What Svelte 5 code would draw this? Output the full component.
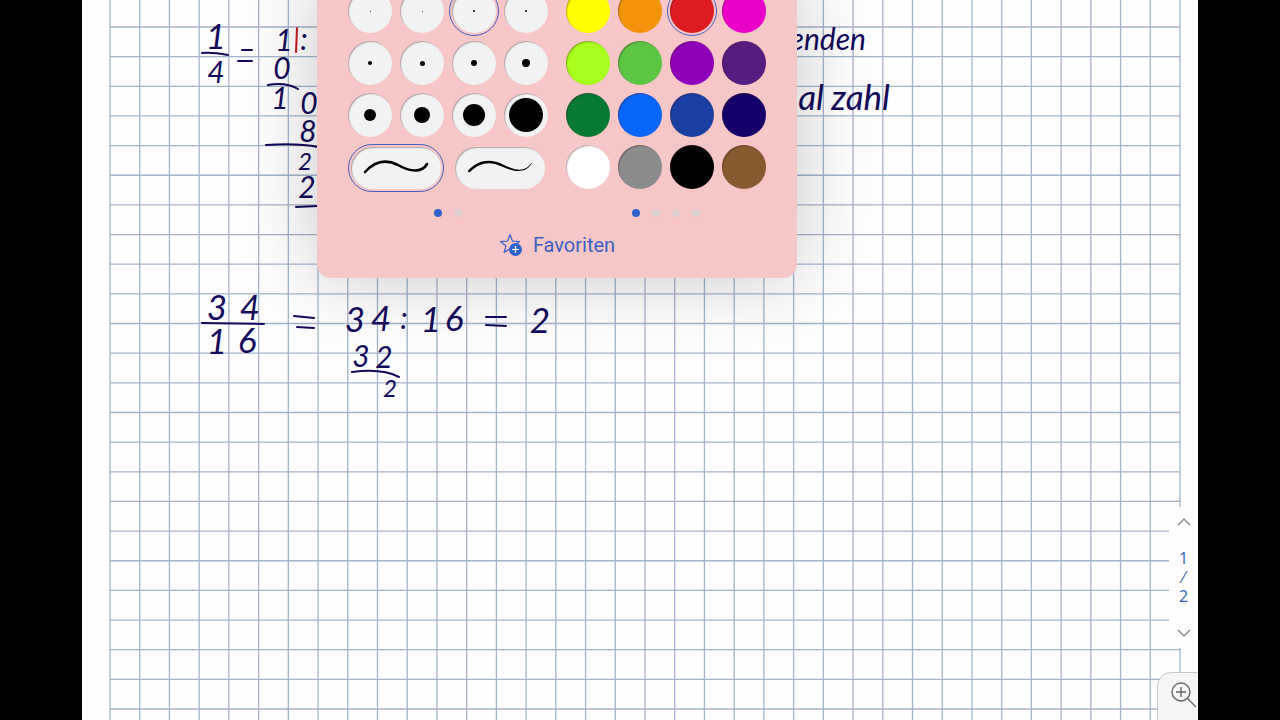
<script lang="ts">
  interface InkText {
    text: string;
    x: number;
    y: number;
    size: 'small' | 'medium' | 'large';
    end?: boolean;
  }

  const nibSizes = [1, 1, 2, 2, 4, 5, 6, 8, 12, 16, 22, 34];

  const colors = [
    { name: 'Gelb', value: '#ffff00' },
    { name: 'Orange', value: '#f2930b' },
    { name: 'Rot', value: '#dc1c22' },
    { name: 'Magenta', value: '#ea00c8' },
    { name: 'Limette', value: '#a6ff1c' },
    { name: 'Hellgrün', value: '#5dc544' },
    { name: 'Violett', value: '#8e00b9' },
    { name: 'Dunkelviolett', value: '#561d80' },
    { name: 'Grün', value: '#087a36' },
    { name: 'Hellblau', value: '#0866fb' },
    { name: 'Blau', value: '#1c3fa3' },
    { name: 'Dunkelblau', value: '#140068' },
    { name: 'Weiß', value: '#ffffff' },
    { name: 'Grau', value: '#8c8c8c' },
    { name: 'Schwarz', value: '#000000' },
    { name: 'Braun', value: '#875a30' }
  ];

  const inkTexts: InkText[] = [
    { text: '1', x: 134, y: 49, size: 'large' },
    { text: '4', x: 134, y: 83, size: 'medium' },
    { text: '1', x: 202, y: 51, size: 'medium' },
    { text: ':', x: 222, y: 50, size: 'medium' },
    { text: '0', x: 200, y: 79, size: 'medium' },
    { text: '1', x: 198, y: 109, size: 'medium' },
    { text: '0', x: 227, y: 114, size: 'medium' },
    { text: '8', x: 226, y: 142, size: 'medium' },
    { text: '2', x: 223, y: 170, size: 'small' },
    { text: '2', x: 225, y: 198, size: 'medium' },
    { text: 'enden', x: 784, y: 50, size: 'medium', end: true },
    { text: 'al', x: 742, y: 110, size: 'large', end: true },
    { text: 'zahl', x: 808, y: 110, size: 'large', end: true },
    { text: '3', x: 135, y: 320, size: 'large' },
    { text: '4', x: 168, y: 320, size: 'large' },
    { text: '1', x: 135, y: 354, size: 'large' },
    { text: '6', x: 165, y: 353, size: 'large' },
    { text: '3', x: 273, y: 332, size: 'large' },
    { text: '4', x: 299, y: 331, size: 'large' },
    { text: ':', x: 322, y: 329, size: 'medium' },
    { text: '1', x: 349, y: 332, size: 'large' },
    { text: '6', x: 372, y: 331, size: 'large' },
    { text: '2', x: 458, y: 333, size: 'large' },
    { text: '3', x: 279, y: 367, size: 'medium' },
    { text: '2', x: 302, y: 368, size: 'medium' },
    { text: '2', x: 308, y: 397, size: 'small' }
  ];

  // fraction bars, equals signs and subtraction lines
  const inkLines = [
    'M120 53Q130 52 146 55',
    'M160 50H170M156 61H170',
    'M186 85Q204 82 216 89',
    'M184 145Q216 143 236 147',
    'M214 207L236 206',
    'M120 323L182 324',
    'M212 316L232 318M215 327L232 328',
    'M404 317H424M404 325L424 326',
    'M270 372Q300 368 317 377'
  ];

  let selectedSize = $state(2);
  let selectedColor = $state(2);
  let selectedStroke = $state(0);
</script>

<main class="app">
  <section class="sheet" aria-label="Notizseite">
    <svg class="canvas" viewBox="0 0 1116 720" preserveAspectRatio="xMinYMin slice">
      <g class="grid">
        {#each Array(37) as _, i}
          <line x1={28 + (i * 1070) / 36} y1="0" x2={28 + (i * 1070) / 36} y2="720" />
        {/each}
        {#each Array(24) as _, i}
          <line x1="28" y1={27 + (i * 682) / 23} x2="1098" y2={27 + (i * 682) / 23} />
        {/each}
      </g>
      <g class="ink">
        {#each inkTexts as item}
          <text class={item.size} class:end={item.end} x={item.x} y={item.y}>{item.text}</text>
        {/each}
        {#each inkLines as line}
          <path d={line} />
        {/each}
        <path class="correction" d="M215 28L214 52" />
      </g>
    </svg>

    <div class="panel">
      <div class="columns">
        <div class="column">
          <div class="swatches">
            {#each nibSizes as size, i}
              <button
                class="swatch nib"
                class:selected={selectedSize === i}
                aria-label={`Strichstärke ${i + 1}`}
                onclick={() => (selectedSize = i)}
              >
                <span class="nib-dot" style="width: {size}px; height: {size}px"></span>
              </button>
            {/each}
          </div>
          <div class="strokes">
            <button
              class="stroke"
              class:selected={selectedStroke === 0}
              aria-label="Gleichmäßiger Strich"
              onclick={() => (selectedStroke = 0)}
            >
              <svg width="66" height="16" viewBox="0 0 66 16">
                <path
                  d="M2 12C12 1 23-1 35 5C47 12 59 13 64 4"
                  fill="none"
                  stroke="#000"
                  stroke-width="2.6"
                  stroke-linecap="round"
                />
              </svg>
            </button>
            <button
              class="stroke"
              class:selected={selectedStroke === 1}
              aria-label="Auslaufender Strich"
              onclick={() => (selectedStroke = 1)}
            >
              <svg width="66" height="16" viewBox="0 0 66 16">
                <path
                  d="M1 10.500C11 0 23-2 36 4.400C48 10.500 58 13 64.500 2.800L65 3C59 14 47 12 35 6.500C23 1 13 2 3 12A1.300 1.300 0 0 1 1 10.500Z"
                />
              </svg>
            </button>
          </div>
          <div class="dots">
            <span class="dot active"></span>
            <span class="dot"></span>
          </div>
        </div>

        <div class="column">
          <div class="swatches">
            {#each colors as color, i}
              <button
                class="swatch"
                class:selected={selectedColor === i}
                style="background: {color.value}"
                aria-label={color.name}
                onclick={() => (selectedColor = i)}
              ></button>
            {/each}
          </div>
          <div class="dots">
            <span class="dot active"></span>
            <span class="dot"></span>
            <span class="dot"></span>
            <span class="dot"></span>
          </div>
        </div>
      </div>

      <button class="favorites">
        <svg width="24" height="24" viewBox="0 0 24 24">
          <path
            d="M11 1.500L13.500 8.200L20.500 8.500L15 13L16.900 19.500L11 15.800L5.100 19.500L7 13L1.500 8.500L8.500 8.200Z"
            fill="none"
            stroke="#3662c8"
            stroke-width="1.2"
            stroke-linejoin="round"
          />
          <circle cx="16.500" cy="16.500" r="6.500" fill="#3062cb" />
          <path d="M16.500 13.100V19.900M13.100 16.500H19.900" stroke="#fff" stroke-width="1.2" />
        </svg>
        Favoriten
      </button>
    </div>

    <nav class="pager" aria-label="Seiten">
      <button aria-label="Vorherige Seite">
        <svg width="14" height="8" viewBox="0 0 14 8"><path d="M1 7L7 1L13 7" /></svg>
      </button>
      <div class="pages">
        <span>1</span>
        <span class="slash">⁄</span>
        <span>2</span>
      </div>
      <button aria-label="Nächste Seite">
        <svg width="14" height="8" viewBox="0 0 14 8"><path d="M1 1L7 7L13 1" /></svg>
      </button>
    </nav>

    <button class="zoom" aria-label="Vergrößern">
      <svg width="28" height="28" viewBox="0 0 28 28">
        <circle cx="11" cy="11" r="9" />
        <path d="M11 6V16M6 11H16M17.500 17.500L26 26" />
      </svg>
    </button>
  </section>
</main>

<style>
  :global(body) {
    margin: 0;
    background: #000;
  }

  .app {
    display: flex;
    min-height: 100vh;
    padding: 0 82px;
    font-family: Roboto, 'Liberation Sans', sans-serif;
  }

  .sheet {
    position: relative;
    flex: 1;
    overflow: hidden;
    background: #fefefe;
  }

  .canvas {
    position: absolute;
    inset: 0;
    width: 100%;
    height: 100%;
  }

  .grid line {
    stroke: #a3b3cb;
    stroke-width: 1.3;
  }

  .ink text {
    fill: #140a5c;
    font-family: Lato, 'Open Sans', sans-serif;
    font-style: italic;
    text-anchor: middle;
  }

  .ink .small {
    font-size: 24px;
  }

  .ink .medium {
    font-size: 30px;
  }

  .ink .large {
    font-size: 35px;
  }

  .ink .end {
    text-anchor: end;
  }

  .ink path {
    fill: none;
    stroke: #140a5c;
    stroke-width: 2;
    stroke-linecap: round;
  }

  .ink .correction {
    stroke: #c8171d;
  }

  button {
    padding: 0;
    border: none;
    background: none;
    font-family: inherit;
    cursor: pointer;
  }

  /* Pen settings popover */
  .panel {
    position: absolute;
    top: -24px;
    left: 235px;
    box-sizing: border-box;
    width: 480px;
    padding: 13px 31px 21px;
    border-radius: 14px;
    background: #f7c7c8;
    box-shadow: 0 0 80px rgba(0, 0, 0, 0.22);
  }

  .columns {
    display: flex;
    gap: 18px;
  }

  .column {
    display: flex;
    flex: 1;
    flex-direction: column;
    justify-content: space-between;
  }

  .swatches {
    display: grid;
    grid-template-columns: repeat(4, 44px);
    gap: 8px;
  }

  .swatch {
    display: flex;
    align-items: center;
    justify-content: center;
    height: 44px;
    border-radius: 50%;
    box-shadow: inset 1px 1px 1px rgba(60, 20, 30, 0.35);
  }

  .nib,
  .stroke {
    background: #f2f2f2;
  }

  .nib-dot {
    border-radius: 50%;
    background: #000;
  }

  .selected {
    outline: 1px solid #4560bd;
    outline-offset: 2px;
  }

  .strokes {
    display: grid;
    grid-template-columns: 1fr 1fr;
    gap: 8px;
    margin: 10px 0 20px;
    justify-items: center;
  }

  .stroke {
    display: flex;
    align-items: center;
    justify-content: center;
    width: 90px;
    height: 42px;
    border-radius: 21px;
    box-shadow: inset 1px 1px 1px rgba(60, 20, 30, 0.35);
  }

  .dots {
    display: flex;
    justify-content: center;
    gap: 12px;
  }

  .dot {
    width: 8px;
    height: 8px;
    border-radius: 50%;
    background: #dfcfce;
  }

  .dot.active {
    background: #3062cb;
  }

  .favorites {
    display: flex;
    align-items: center;
    gap: 10px;
    margin: 16px auto 0;
    color: #3a60c2;
    font-size: 20px;
    line-height: 24px;
  }

  .pager {
    position: absolute;
    top: 507px;
    right: 0;
    display: flex;
    flex-direction: column;
    align-items: center;
    justify-content: space-between;
    box-sizing: border-box;
    width: 29px;
    height: 141px;
    padding: 11px 0;
    background: #fefefe;
  }

  .pager button {
    display: flex;
  }

  .pager path {
    fill: none;
    stroke: #777;
    stroke-width: 1.2;
  }

  .pages {
    display: flex;
    flex-direction: column;
    align-items: center;
    color: #2f5fad;
    font-family: 'Open Sans', Roboto, sans-serif;
    font-size: 16px;
    line-height: 19px;
  }

  .zoom {
    position: absolute;
    right: -1px;
    bottom: -1px;
    display: flex;
    box-sizing: border-box;
    width: 42px;
    height: 49px;
    padding: 8px 0 0 12px;
    border: 1px solid #c4c6ca;
    border-radius: 14px 0 0 0;
    background: #f6f6f7;
  }

  .zoom svg {
    flex: none;
    fill: none;
    stroke: #686868;
    stroke-width: 1.4;
  }
</style>
